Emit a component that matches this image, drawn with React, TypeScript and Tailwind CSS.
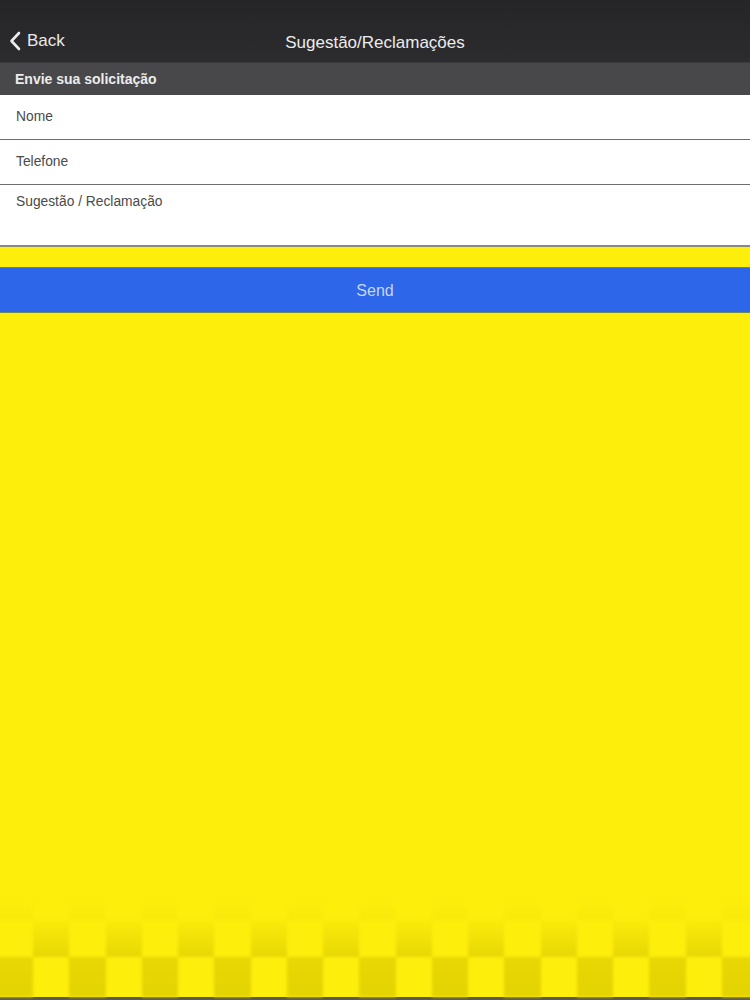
import React from "react";

const COLS = Array.from({ length: 22 }, (_, i) => i);

function CheckerRow({ offset, cellClass, h }: { offset: number; cellClass: string; h: string }) {
  return (
    <div className={`flex ${h} ml-[-3.25px]`}>
      {COLS.map((i) => (
        <div
          key={i}
          className={`w-[36.25px] shrink-0 ${(i + offset) % 2 === 0 ? cellClass : ""}`}
        />
      ))}
    </div>
  );
}

export default function App() {
  return (
    <div
      className="w-[750px] h-[1000px] flex flex-col bg-[#feee0c] overflow-hidden"
      style={{ fontFamily: '"Liberation Sans", Arial, sans-serif' }}
    >
      {/* Nav bar */}
      <div className="h-[62px] shrink-0 bg-gradient-to-b from-[#252527] to-[#2c2b2e] relative flex items-end pb-[11px]">
        <div className="flex items-center pl-[9px] gap-[6px] text-[#e9e9ea]">
          <svg width="12" height="20" viewBox="0 0 12 20" className="mt-[1px]">
            <path d="M10 2 L2.5 10 L10 18" stroke="#ececec" strokeWidth="2.6" fill="none" strokeLinecap="round" strokeLinejoin="round" />
          </svg>
          <span className="text-[17px] leading-none">Back</span>
        </div>
        <div className="absolute left-0 right-0 bottom-[11px] text-center text-[17px] leading-none text-[#ececec]">
          Sugestão/Reclamações
        </div>
      </div>

      {/* Section header */}
      <div className="h-[33px] shrink-0 bg-[#48474a] border-t border-[#3a393c] flex items-center pl-[15px] text-[14px] font-semibold text-[#ececec]">
        Envie sua solicitação
      </div>

      {/* Fields */}
      <div className="bg-white shrink-0">
        <div className="h-[45px] border-b-[1.5px] border-[#6e6e6e] flex items-center pl-[16px] text-[13.8px] text-[#4a4a4a]">
          Nome
        </div>
        <div className="h-[45px] border-b-[1.5px] border-[#6e6e6e] flex items-center pl-[16px] text-[13.8px] text-[#4a4a4a]">
          Telefone
        </div>
        <div className="h-[62px] border-b-[2px] border-[#8a8a7a] pl-[16px] pt-[7px] text-[13.8px] text-[#4a4a4a]">
          Sugestão / Reclamação
        </div>
      </div>

      <div className="h-[20px] shrink-0" />

      {/* Send button */}
      <div className="h-[46px] shrink-0 bg-[#2d66e8] border-y border-[#6b8a5a] flex items-center justify-center pt-[2px] text-[16px] text-[#c6d6f4]">
        Send
      </div>

      <div className="flex-1" />

      {/* Checker pattern */}
      <div className="shrink-0 blur-[1.5px]">
        <CheckerRow offset={0} h="h-[20px]" cellClass="bg-gradient-to-b from-[#feee0c] to-[#f9e90a]" />
        <CheckerRow offset={1} h="h-[37px]" cellClass="bg-gradient-to-b from-[#fbeb0b] to-[#e8d704]" />
        <CheckerRow offset={0} h="h-[40px]" cellClass="bg-gradient-to-b from-[#e8d704] to-[#e4d302]" />
      </div>
      <div className="h-[3px] shrink-0 bg-[#5a5a4a]" />
    </div>
  );
}
